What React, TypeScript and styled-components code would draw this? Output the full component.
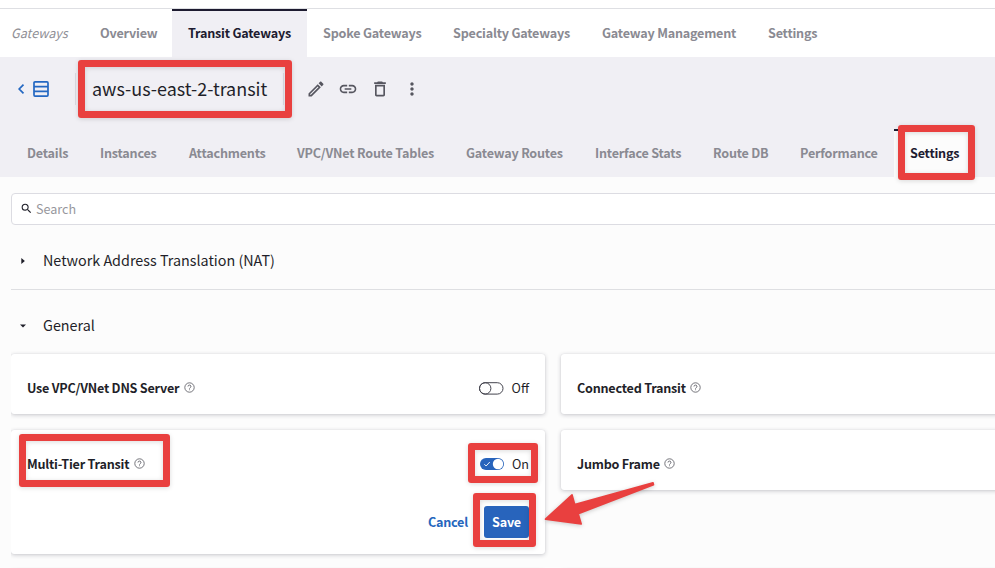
import React from "react";
import styled, { createGlobalStyle } from "styled-components";
import { MdOutlineEdit, MdLink, MdDeleteOutline, MdMoreVert, MdSearch } from "react-icons/md";

const GlobalStyle = createGlobalStyle`
  * { box-sizing: border-box; }
  body {
    margin: 0;
    background: #fcfcfc;
    color: #1f1f29;
    font-family: "Source Sans Pro", "Noto Sans CJK SC", sans-serif;
    overflow: hidden;
  }
`;

const Page = styled.div`
  position: relative;
  width: 995px;
  height: 568px;
  overflow: hidden;
  display: flex;
  flex-direction: column;
`;

const TabBar = styled.nav<{ $top?: boolean }>`
  display: flex;
  flex: none;
  height: 48px;
  padding-left: ${(p) => (p.$top ? 0 : 11)}px;
`;

const TopNav = styled.div`
  flex: none;
  padding-top: 8px;
  background: #fff;
  & > nav {
    height: 49px;
    border-top: 1px solid #dedfe3;
  }
`;

const Section = styled.span`
  width: 84px;
  padding-left: 11px;
  font-size: 12.6px;
  font-style: italic;
  line-height: 48px;
  color: #8f8f96;
`;

const Tab = styled.a<{ $w: number; $active?: boolean; $bg?: string }>`
  flex: none;
  width: ${(p) => p.$w}px;
  padding-left: 16px;
  white-space: nowrap;
  font-size: 12.6px;
  font-weight: 600;
  line-height: 48px;
  letter-spacing: -0.21px;
  color: ${(p) => (p.$active ? "#1d1b30" : "#8a8a92")};
  background: ${(p) => (p.$active ? p.$bg : "transparent")};
  box-shadow: ${(p) => (p.$active ? "inset 0 2px #1d1b30" : "none")};
`;

const Header = styled.header`
  flex: none;
  height: 120px;
  background: #f0eff4;
`;

const TitleRow = styled.div`
  display: flex;
  align-items: center;
  height: 64px;
  margin-bottom: 8px;
  padding-left: 17px;
`;

const Title = styled.h1`
  width: 209px;
  height: 32px;
  margin: 0 22px 0 26px;
  padding-left: 16px;
  border-left: 1px solid #dcdbe2;
  border-right: 1px solid #dcdbe2;
  font-size: 17.95px;
  font-weight: 400;
  line-height: 30px;
  white-space: nowrap;
`;

const Actions = styled.div`
  display: flex;
  gap: 12px;
  color: #56565f;
`;

const Content = styled.main`
  flex: 1;
  min-height: 0;
  margin-left: 11px;
  padding-top: 16px;
  overflow: hidden;
`;

const Panel = styled.div`
  width: 1084px;
`;

const SearchBox = styled.div`
  display: flex;
  align-items: center;
  height: 32px;
  padding: 0 0 2px 8px;
  gap: 3px;
  border: 1px solid #dcdce2;
  border-radius: 4px;
  background: #fff;
  font-size: 12.6px;
  color: #97979d;
  svg {
    margin-top: 1px;
    color: #1f1f29;
  }
`;

const Accordion = styled.div<{ $h: number; $line?: boolean }>`
  display: flex;
  align-items: center;
  height: ${(p) => p.$h}px;
  padding: 5px 0 0 8px;
  gap: 16px;
  font-size: 14.35px;
  border-bottom: ${(p) => (p.$line ? "1px solid #dedfe2" : "none")};
  svg { margin-top: 3px; }
`;

const Cards = styled.div`
  display: grid;
  grid-template-columns: 534px 534px;
  gap: 16px;
  align-items: start;
`;

const Card = styled.section<{ $tall?: boolean }>`
  height: ${(p) => (p.$tall ? 124 : 60)}px;
  padding: 17px 16px 0;
  border-radius: 3px;
  background: #fff;
  box-shadow: 0 1px 4px rgba(20, 20, 40, 0.22), 0 0 1px rgba(20, 20, 40, 0.12);
`;

const CardRow = styled.div`
  display: flex;
  align-items: center;
  height: 32px;
`;

const Name = styled.span`
  margin-right: 4.5px;
  font-size: 12.6px;
  font-weight: 600;
  letter-spacing: -0.23px;
  white-space: nowrap;
`;

const State = styled.span`
  display: flex;
  align-items: center;
  gap: 8px;
  margin-left: auto;
  font-size: 12.6px;
  svg { margin-top: 2px; }
`;

const Buttons = styled.div`
  display: flex;
  justify-content: flex-end;
  align-items: center;
  height: 32px;
  margin-top: 27px;
  gap: 16px;
`;

const Button = styled.button<{ $primary?: boolean }>`
  width: ${(p) => (p.$primary ? "45px" : "auto")};
  height: 32px;
  padding: 0 0 2px;
  border: 0;
  border-radius: 3px;
  background: ${(p) => (p.$primary ? "#2864bc" : "none")};
  font: 600 12.6px "Noto Sans CJK SC", sans-serif;
  letter-spacing: -0.2px;
  color: ${(p) => (p.$primary ? "#fff" : "#2566bd")};
`;

const Highlight = styled.div<{ $x: number; $y: number; $w: number; $h: number }>`
  position: absolute;
  left: ${(p) => p.$x}px;
  top: ${(p) => p.$y}px;
  width: ${(p) => p.$w}px;
  height: ${(p) => p.$h}px;
  border: 7px solid #e9403f;
  border-radius: 3px;
  box-shadow: 0 1px 5px rgba(0, 0, 0, 0.14), inset 0 1px 5px rgba(0, 0, 0, 0.14);
`;

const Arrow = styled.svg`
  position: absolute;
  left: 535px;
  top: 475px;
  filter: drop-shadow(0 1px 2px rgba(0, 0, 0, 0.2));
`;

const Help = styled.svg`
  flex: none;
  margin-top: 0;
`;

const HelpIcon = () => (
  <Help width="11" height="11" viewBox="0 0 11 11" fill="none" stroke="#5c5c64" strokeWidth="0.85">
    <circle cx="5.5" cy="5.5" r="4.7" />
    <path d="M4 4.5a1.5 1.4 0 1 1 2.2 1.2c-.5.3-.7.5-.7 1M5.5 7.4v.8" />
  </Help>
);

const ToggleOff = () => (
  <svg width="25" height="13" viewBox="0 0 25 13" fill="none" stroke="#44444e">
    <rect x="0.5" y="0.7" width="23.5" height="11.4" rx="5.7" />
    <circle cx="6.2" cy="6.4" r="5.7" />
  </svg>
);

const ToggleOn = () => (
  <svg width="24" height="12" viewBox="0 0 24 12" fill="none">
    <rect width="24" height="12" rx="6" fill="#2864bc" />
    <circle cx="18" cy="6" r="5.2" fill="#fff" />
    <path d="M4.3 6.2l1.8 1.8L9.8 4" stroke="#fff" strokeWidth="0.9" />
  </svg>
);

const Caret = ({ open }: { open?: boolean }) => (
  <svg width="8" height="8" viewBox="0 0 8 8" fill="#1f1f29">
    <path d={open ? "M1 2.5h6L4 5.6z" : "M2.3 1l3.6 3-3.6 3z"} />
  </svg>
);

const topTabs = [
  { label: "Overview", w: 88 },
  { label: "Transit Gateways", w: 135, active: true },
  { label: "Spoke Gateways", w: 130 },
  { label: "Specialty Gateways", w: 149 },
  { label: "Gateway Management", w: 166 },
  { label: "Settings", w: 82 },
];

const subTabs = [
  { label: "Details", w: 73 },
  { label: "Instances", w: 89 },
  { label: "Attachments", w: 108 },
  { label: "VPC/VNet Route Tables", w: 169 },
  { label: "Gateway Routes", w: 129 },
  { label: "Interface Stats", w: 118 },
  { label: "Route DB", w: 87 },
  { label: "Performance", w: 110 },
  { label: "Settings", w: 81, active: true },
];

export default function App() {
  return (
    <Page>
      <GlobalStyle />
      <TopNav>
        <TabBar $top>
          <Section>Gateways</Section>
          {topTabs.map((t) => (
            <Tab key={t.label} $w={t.w} $active={t.active} $bg="#f0eff4">{t.label}</Tab>
          ))}
        </TabBar>
      </TopNav>
      <Header>
        <TitleRow>
          <svg width="32" height="16" viewBox="0 0 32 16" fill="none" stroke="#2468c2" strokeWidth="1.7">
            <path d="M6.5 3.7L2.2 8l4.3 4.3" />
            <rect x="17" y="0.9" width="14" height="14.2" rx="1" />
            <path d="M17 5.6h14M17 10.4h14" />
          </svg>
          <Title>aws-us-east-2-transit</Title>
          <Actions>
            <MdOutlineEdit size={20} />
            <MdLink size={20} />
            <MdDeleteOutline size={20} />
            <MdMoreVert size={20} />
          </Actions>
        </TitleRow>
        <TabBar>
          {subTabs.map((t) => (
            <Tab key={t.label} $w={t.w} $active={t.active} $bg="#fcfcfc">{t.label}</Tab>
          ))}
        </TabBar>
      </Header>
      <Content>
        <Panel>
          <SearchBox><MdSearch size={13} />Search</SearchBox>
          <Accordion $h={65} $line><Caret />Network Address Translation (NAT)</Accordion>
          <Accordion $h={64}><Caret open />General</Accordion>
          <Cards>
            <Card>
              <CardRow>
                <Name>Use VPC/VNet DNS Server</Name><HelpIcon />
                <State><ToggleOff />Off</State>
              </CardRow>
            </Card>
            <Card><CardRow><Name>Connected Transit</Name><HelpIcon /></CardRow></Card>
            <Card $tall>
              <CardRow>
                <Name>Multi-Tier Transit</Name><HelpIcon />
                <State><ToggleOn />On</State>
              </CardRow>
              <Buttons><Button>Cancel</Button><Button $primary>Save</Button></Buttons>
            </Card>
            <Card><CardRow><Name>Jumbo Frame</Name><HelpIcon /></CardRow></Card>
            <Card />
            <Card />
          </Cards>
        </Panel>
      </Content>
      <Highlight $x={77.5} $y={59.5} $w={214.5} $h={58} />
      <Highlight $x={898} $y={125} $w={77} $h={55} />
      <Highlight $x={19} $y={434} $w={151} $h={53} />
      <Highlight $x={468} $y={443} $w={70} $h={40} />
      <Highlight $x={473} $y={493.4} $w={63.4} $h={54} />
      <Arrow width="130" height="60" viewBox="0 0 130 60" fill="#e9403f" stroke="#e9403f" strokeLinejoin="round">
        <path d="M10.5 44.2L37 19.8L39.7 29.5L118 7.8L118.5 9.8L43.2 38.7L46.2 49z" strokeWidth="1.6" />
      </Arrow>
    </Page>
  );
}
